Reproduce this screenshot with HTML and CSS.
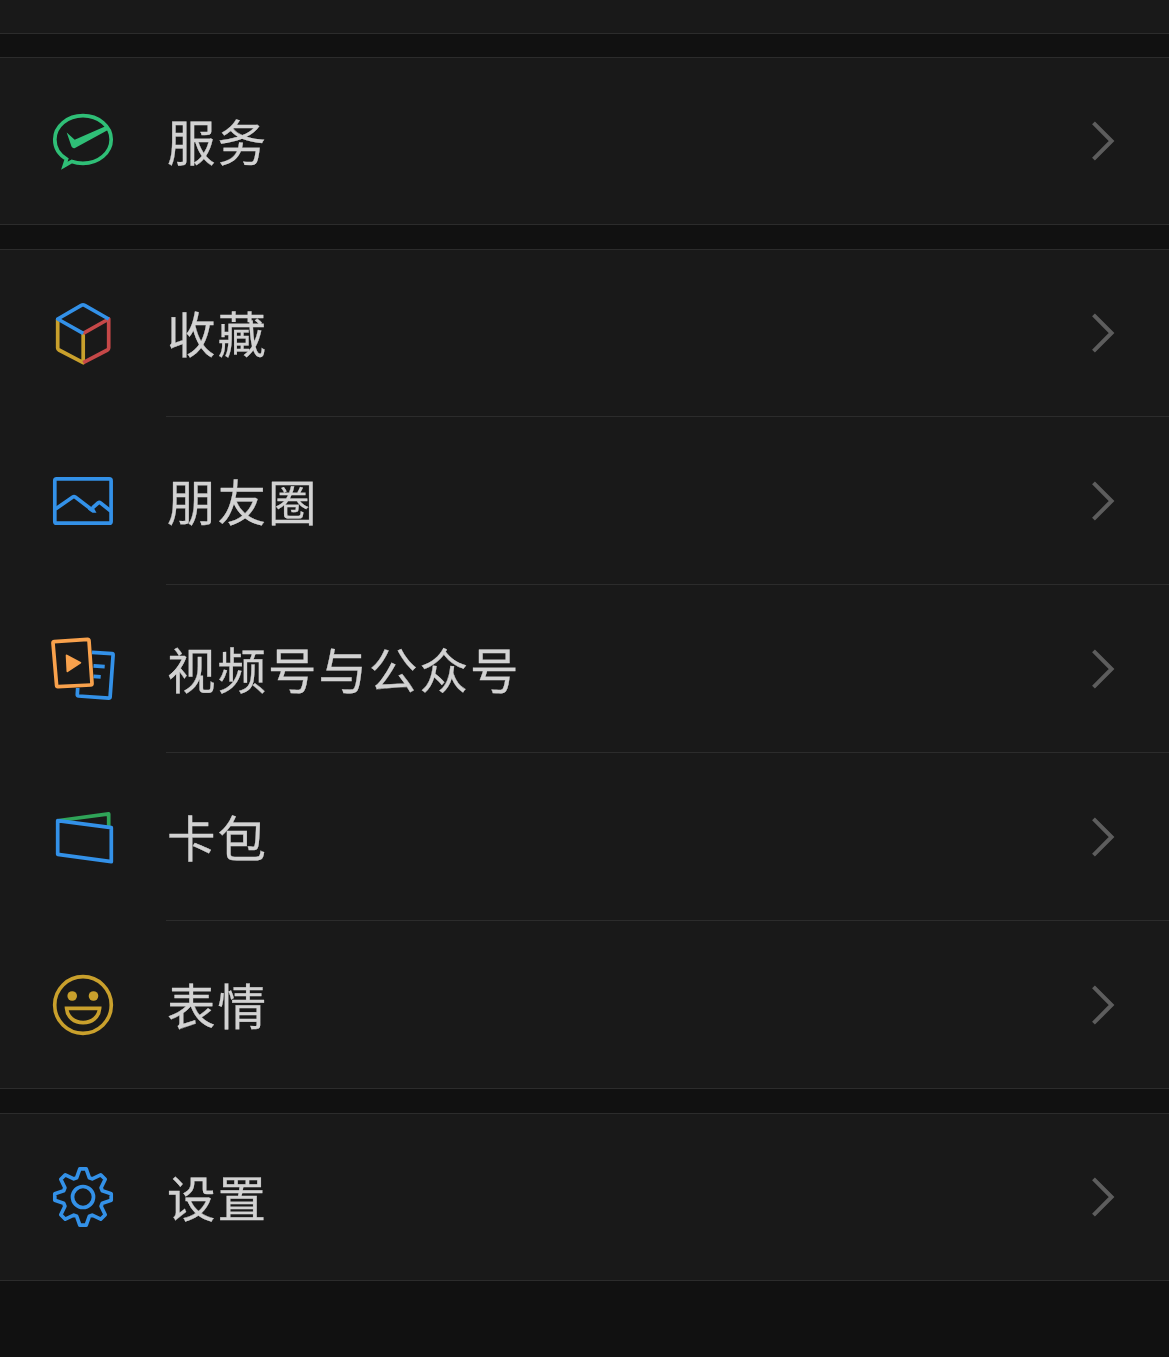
FILE: index.html
```html
<!DOCTYPE html>
<html lang="zh-CN">
<head>
<meta charset="utf-8">
<title>我</title>
<link rel="stylesheet" href="styles.css">
</head>
<body>
<svg class="defs" aria-hidden="true">
  <symbol id="chevron" viewBox="0 0 28 44"><path d="M4.500 3.800 22.600 22 4.500 40.200"/></symbol>
</svg>
<main class="page">
  <div class="profile-end"></div>

  <section class="group">
    <a class="row">
      <svg class="icon green" viewBox="0 0 72 72"><path class="miter" d="M19.500 54C12.300 49.800 7.800 42.500 7.800 34.500C7.800 21.300 20.400 10.700 36 10.700S64.200 21.300 64.200 34.500S51.600 58.300 36 58.300C32 58.300 28.200 57.700 24.800 56.500L17.300 60.700Z"/><path class="fill" d="M19.700 27.500 27.700 34.800 58.500 21.200 62.300 24.200 28 43Q26 44 24.500 41.500Z"/></svg>
      <span class="label">服务</span><svg class="arrow"><use href="#chevron"/></svg>
    </a>
  </section>

  <section class="group">
    <a class="row">
      <svg class="icon" viewBox="0 0 72 72"><path class="gold" d="M10.700 22V51Q10.700 52.300 12 53L36.200 65.700V36.300"/><path class="red" d="M36.200 36.300 61.700 22V51Q61.700 52.300 60.400 53L36.200 65.700"/><path class="blue" d="M36.200 36.300 10.700 22 34.700 8.200Q36 7.400 37.300 8.200L61.700 22"/></svg>
      <span class="label">收藏</span><svg class="arrow"><use href="#chevron"/></svg>
    </a>
    <a class="row">
      <svg class="icon blue" viewBox="0 0 72 72"><rect x="7.800" y="13.900" width="56.300" height="44.300" rx="1.800"/><path d="M8.500 44 25.800 32Q27 31.200 28.200 32L45.500 45.200M45.500 42.800 51 38Q52.300 37 53.600 38L63.700 46"/><path class="fill" d="M42 43 46 41.500 49.500 47.800H45.500L41 44.500Z"/></svg>
      <span class="label">朋友圈</span><svg class="arrow"><use href="#chevron"/></svg>
    </a>
    <a class="row">
      <svg class="icon" viewBox="0 0 72 72"><path class="blue" d="M45 19.300 65 20.600Q66.200 20.700 66.100 22L63.100 64Q63 65.300 61.700 65.200L31.500 63Q30.200 62.900 30.300 61.600L30.700 55M46.500 32.800 57.700 33.600M46.500 43.300 53.700 43.900"/><path class="orange" d="M7.300 8.600 40.500 6.400Q41.900 6.300 42 7.700L45 50.500Q45.100 51.900 43.700 52L11.100 53.700Q9.700 53.800 9.600 52.400L6 10.100Q5.900 8.700 7.300 8.600Z"/><path class="orange fill" d="M18.700 22.500Q18.700 20.800 20.200 21.700L33.800 28.900Q35 29.700 33.800 30.600L20.900 39Q19.600 39.700 19.500 38.200Z"/></svg>
      <span class="label">视频号与公众号</span><svg class="arrow"><use href="#chevron"/></svg>
    </a>
    <a class="row">
      <svg class="icon" viewBox="0 0 72 72"><path class="deep-green" d="M12 19.500 61.700 12.900V25"/><path class="blue" d="M10.700 19.700 64.300 26.700V60.700L10.700 53.300Z"/></svg>
      <span class="label">卡包</span><svg class="arrow"><use href="#chevron"/></svg>
    </a>
    <a class="row">
      <svg class="icon gold" viewBox="0 0 72 72"><circle cx="36" cy="36" r="28.300"/><circle class="fill" cx="25.200" cy="27" r="4.800"/><circle class="fill" cx="46.500" cy="27" r="4.800"/><path class="miter" d="M19.600 39.400H52.600C52 48 45 53.700 36.100 53.700S20.200 48 19.600 39.400Z"/></svg>
      <span class="label">表情</span><svg class="arrow"><use href="#chevron"/></svg>
    </a>
  </section>

  <section class="group">
    <a class="row">
      <svg class="icon blue" viewBox="-36 -36 72 72"><path d="M-6.300-19.300-3.200-28.200H3.200L6.300-19.300 9.200-18.100 17.700-22.200 22.200-17.700 18.100-9.200 19.300-6.300 28.200-3.200V3.200L19.300 6.300 18.100 9.200 22.200 17.700 17.700 22.200 9.200 18.100 6.300 19.300 3.200 28.200H-3.200L-6.300 19.300-9.200 18.100-17.700 22.200-22.200 17.700-18.100 9.200-19.300 6.300-28.200 3.200V-3.200L-19.300-6.300-18.100-9.200-22.200-17.700-17.700-22.200-9.200-18.100Z"/><circle r="10.500"/></svg>
      <span class="label">设置</span><svg class="arrow"><use href="#chevron"/></svg>
    </a>
  </section>
</main>
</body>
</html>
```
FILE: styles.css
```css
* { box-sizing: border-box; }
body { margin: 0; background: #111; }
.defs { display: none; }
.page {
  display: flex;
  flex-direction: column;
  gap: 24px;
  min-height: 1357px;
  overflow: hidden;
  font-family: "Noto Sans CJK SC", sans-serif;
  color: #d2d2d2;
}
.profile-end {
  height: 34px;
  margin-bottom: -1px;
  background: #191919;
  border-bottom: 1px solid #2c2c2c;
}
.group {
  background: #191919;
  border-top: 1px solid #2c2c2c;
  border-bottom: 1px solid #2c2c2c;
}
.row {
  display: flex;
  align-items: center;
  height: 168px;
  padding: 0 52px 0 47px;
  background: linear-gradient(#2c2c2c, #2c2c2c) 166px 100% / 100% 1px no-repeat;
}
.row:first-child { height: 167px; padding-bottom: 1px; }
.row:last-child { height: 167px; background: none; }
.row:only-child { height: 166px; padding-bottom: 0; }
.icon {
  flex: none;
  width: 72px;
  height: 72px;
  margin-right: 48px;
  fill: none;
  stroke: currentColor;
  stroke-width: 3.7;
  stroke-linejoin: round;
}
.icon [class] { stroke: currentColor; }
.icon .fill { fill: currentColor; stroke: none; }
.icon .miter { stroke-linejoin: miter; }
.green { color: #2fbf77; }
.deep-green { color: #2fa458; }
.blue { color: #3391e8; }
.gold { color: #c9a02c; }
.red { color: #c64848; }
.orange { color: #f8a14c; }
.label {
  flex: 1;
  padding-bottom: 2px;
  font-size: 48.5px;
  line-height: 72px;
  letter-spacing: 2px;
  -webkit-text-stroke: 0.3px currentColor;
}
.arrow {
  width: 28px;
  height: 44px;
  fill: none;
  stroke: #5d5d5d;
  stroke-width: 4;
}
```
